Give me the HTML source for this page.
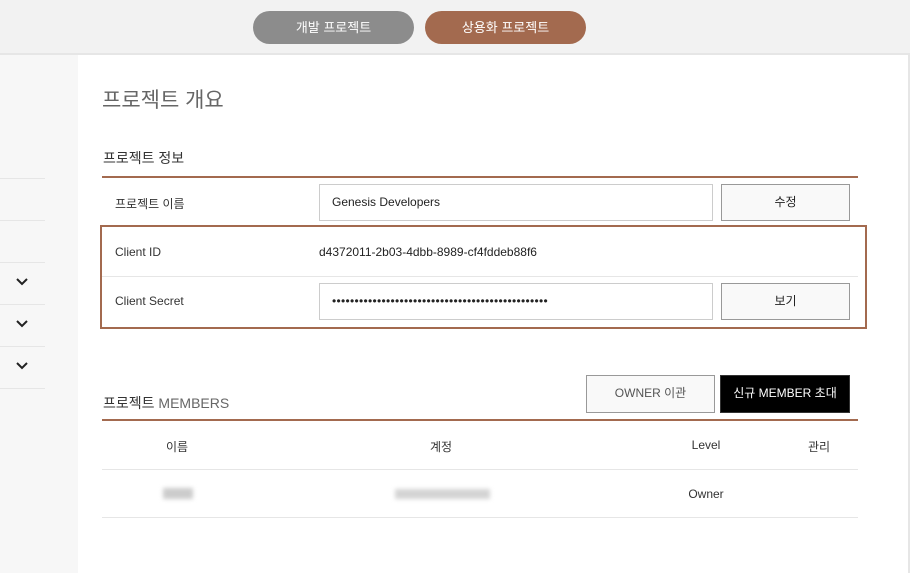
<!DOCTYPE html>
<html><head><meta charset="utf-8"><style>
*{margin:0;padding:0;box-sizing:border-box}
body{width:910px;height:573px;background:#fff;font-family:"Liberation Sans","Noto Sans CJK KR",sans-serif;color:#333;position:relative;overflow:hidden}
.a{position:absolute}
.top{left:0;top:0;width:910px;height:55px;background:#f2f2f2;border-bottom:2px solid #e6e6e6}
.pill{top:11px;height:33px;width:161px;border-radius:17px;color:#fff;font-size:13px;text-align:center;line-height:33px}
.side{left:0;top:55px;width:78px;height:518px;background:#f7f7f7}
.sl{left:0;width:45px;height:1px;background:#e6e6e6}
.chev{left:16px;width:12px;height:12px}
.t{font-size:12px;color:#333}
.inp{border:1px solid #ccc;background:#fff;font-size:12px;padding-left:12px;line-height:34px;color:#222}
.btn{border:1px solid #999;background:#f9f9f9;font-size:12px;text-align:center;line-height:34px;color:#222}
.c{text-align:center;width:100px;font-size:12px}
</style></head><body>
<div class="a top"></div>
<div class="a pill" style="left:253px;background:#8c8c8c">개발 프로젝트</div>
<div class="a pill" style="left:425px;background:#a36a4f">상용화 프로젝트</div>
<div class="a side"></div>
<div class="a sl" style="top:178px"></div><div class="a sl" style="top:220px"></div><div class="a sl" style="top:262px"></div><div class="a sl" style="top:304px"></div><div class="a sl" style="top:346px"></div><div class="a sl" style="top:388px"></div>
<svg class="a chev" style="top:276px" viewBox="0 0 12 12"><path d="M1 3l5 5 5-5" fill="none" stroke="#222" stroke-width="2"/></svg>
<svg class="a chev" style="top:318px" viewBox="0 0 12 12"><path d="M1 3l5 5 5-5" fill="none" stroke="#222" stroke-width="2"/></svg>
<svg class="a chev" style="top:360px" viewBox="0 0 12 12"><path d="M1 3l5 5 5-5" fill="none" stroke="#222" stroke-width="2"/></svg>
<div class="a" style="left:908px;top:55px;width:2px;height:518px;background:#e6e6e6"></div>
<div class="a" style="left:102px;top:86px;font-size:21px;color:#666;line-height:30px">프로젝트 개요</div>
<div class="a" style="left:103px;top:148px;font-size:14px;color:#333">프로젝트 정보</div>
<div class="a" style="left:102px;top:176px;width:756px;height:2px;background:#a36a4f"></div>
<div class="a t" style="left:115px;top:195px">프로젝트 이름</div>
<div class="a inp" style="left:319px;top:184px;width:394px;height:37px">Genesis Developers</div>
<div class="a btn" style="left:721px;top:184px;width:129px;height:37px">수정</div>
<div class="a" style="left:100px;top:225px;width:767px;height:104px;border:2px solid #a36a4f"></div>
<div class="a" style="left:102px;top:276px;width:756px;height:1px;background:#e6e6e6"></div>
<div class="a t" style="left:115px;top:245px">Client ID</div>
<div class="a t" style="left:319px;top:245px;color:#222">d4372011-2b03-4dbb-8989-cf4fddeb88f6</div>
<div class="a t" style="left:115px;top:294px">Client Secret</div>
<div class="a inp" style="left:319px;top:283px;width:394px;height:37px;letter-spacing:0.3px">••••••••••••••••••••••••••••••••••••••••••••••••</div>
<div class="a btn" style="left:721px;top:283px;width:129px;height:37px">보기</div>
<div class="a" style="left:103px;top:393px;font-size:14px;color:#333">프로젝트 <span style="color:#666">MEMBERS</span></div>
<div class="a btn" style="left:586px;top:375px;width:129px;height:38px;color:#555">OWNER 이관</div>
<div class="a btn" style="left:720px;top:375px;width:130px;height:38px;background:#000;color:#fff;border-color:#333">신규 MEMBER 초대</div>
<div class="a" style="left:102px;top:419px;width:756px;height:2px;background:#a36a4f"></div>
<div class="a c" style="left:127px;top:438px">이름</div>
<div class="a c" style="left:391px;top:438px">계정</div>
<div class="a c" style="left:656px;top:438px">Level</div>
<div class="a c" style="left:769px;top:438px">관리</div>
<div class="a" style="left:102px;top:469px;width:756px;height:1px;background:#e6e6e6"></div>
<div class="a" style="left:163px;top:488px;width:30px;height:11px;background:#ccc;filter:blur(2px)"></div>
<div class="a" style="left:395px;top:489px;width:95px;height:10px;background:#d4d4d4;filter:blur(2px)"></div>
<div class="a c" style="left:656px;top:487px">Owner</div>
<div class="a" style="left:102px;top:517px;width:756px;height:1px;background:#e6e6e6"></div>
</body></html>
